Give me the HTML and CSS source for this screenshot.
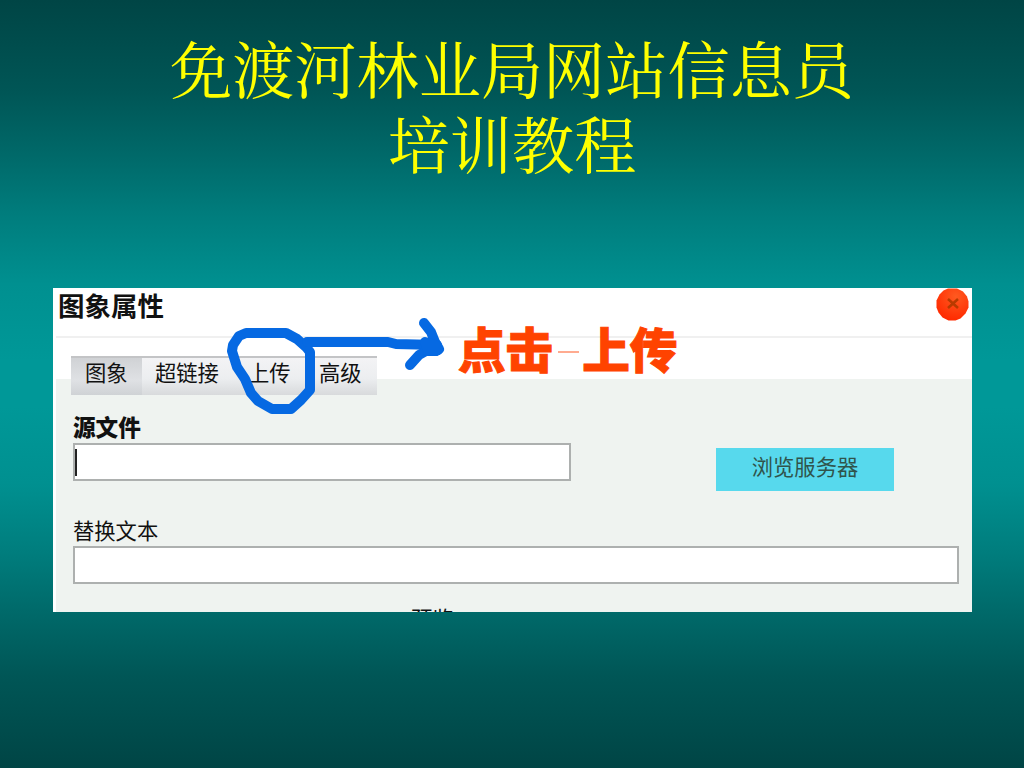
FILE: index.html
```
<!DOCTYPE html>
<html lang="zh-CN">
<head>
<meta charset="utf-8">
<title>免渡河林业局网站信息员培训教程</title>
<link rel="stylesheet" href="styles.css">
</head>
<body>
<main class="slide">
  <h1 class="slide-title">免渡河林业局网站信息员<br>培训教程</h1>
  <section class="dialog">
    <header class="dialog-header">
      <h2 class="dialog-title">图象属性</h2>
      <svg class="close" width="33" height="33" viewBox="0 0 33 33" aria-label="关闭">
        <defs><radialGradient id="red" cx=".6" cy=".25" r=".75"><stop offset="0" stop-color="#ff5a20"/><stop offset="1" stop-color="#ff2a00"/></radialGradient></defs>
        <path d="M12 .5h9l6 3 4 5 1.500 5v6l-3 6-5 5-5 2h-7l-6-3-4-5-2-5v-7l3-6 4-4z" fill="url(#red)"/>
        <path d="M12 11l10 9M22 11l-10 9" stroke="#b83a00" stroke-width="2.600"/>
      </svg>
    </header>
    <div class="tab-row">
      <nav class="tabs">
        <span class="tab tab-active">图象</span>
        <span class="tab tab-link">超链接</span>
        <span class="tab tab-upload">上传</span>
        <span class="tab tab-advanced">高级</span>
      </nav>
    </div>
    <div class="form">
      <div class="source-row">
        <div class="field">
          <label class="label label-bold">源文件</label>
          <div class="input input-source"><i class="caret"></i></div>
        </div>
        <span class="browse">浏览服务器</span>
      </div>
      <div class="field">
        <label class="label">替换文本</label>
        <div class="input"></div>
      </div>
      <div class="preview-label">预览</div>
    </div>
    <svg class="annotation" width="919" height="324" viewBox="53 288 919 324" fill="none" stroke="#0669e2" stroke-width="10" stroke-linecap="round" stroke-linejoin="round">
      <path d="M246 333L286 333L297 339L306 347L310 352L310 390L301 400L291 409L272 409L258 401L251 393L245 379L237 367L232 351L233 345L239 336Z"/>
      <path d="M307 342H388L396 344L437 345"/>
      <path d="M424 323L431 332L435 342L439 349L436 351L426 351L419 355L410 365"/>
      <path d="M425 342L436 345L438 350L428 351Z" fill="#0669e2"/>
    </svg>
    <div class="callout"><span>点击</span><i class="dash"></i><span>上传</span></div>
  </section>
</main>
</body>
</html>
```
FILE: styles.css
```
* { box-sizing: border-box; }
body {
  margin: 0;
  font-family: "Liberation Sans", "Noto Sans CJK SC", sans-serif;
  color: #111;
}
.slide {
  width: 1024px;
  height: 768px;
  overflow: hidden;
  padding: 30px 53px 0 53px;
  background: linear-gradient(#004545 0%, #005656 12%, #006b6b 21%, #007d7d 28%, #009090 37%, #009898 47%, #009898 53%, #009090 63%, #007d7d 72%, #006b6b 79%, #005656 88%, #004545 100%);
}
.slide-title {
  margin: 0;
  height: 258px;
  font-family: "Noto Serif CJK SC", "Noto Sans CJK SC", serif;
  font-size: 62.200px;
  font-weight: 400;
  line-height: 75px;
  text-align: center;
  color: #ff0;
}
.dialog {
  position: relative;
  display: flex;
  flex-direction: column;
  width: 919px;
  height: 324px;
  overflow: hidden;
  background: #fff;
}
.dialog-header {
  display: flex;
  flex: none;
  justify-content: space-between;
  height: 50px;
  margin-left: 3px;
  padding: 0 3px 0 2px;
  border-bottom: 2px solid #f0f0f0;
}
.dialog-title {
  margin: 0;
  font-size: 26.500px;
  font-weight: 700;
  line-height: 38px;
}
.tab-row {
  flex: none;
  height: 69px;
  margin-left: 3px;
  padding: 18px 0 0 15px;
  background: linear-gradient(#fff 41px, #eff3f0 41px);
}
.tabs {
  display: flex;
  width: 306px;
  height: 39px;
  border-top: 2px solid #c3c4c6;
  background: linear-gradient(#f3f3f5, #eceef0 55%, #d8dadc);
  font-size: 21.300px;
  line-height: 33px;
}
.tab { white-space: nowrap; }
.tab-active { width: 71px; padding-left: 14px; background: linear-gradient(#d0d2d5, #dfe1e4 60%, #cfd2d5); }
.tab-link { width: 93px; padding-left: 13px; }
.tab-upload { width: 72px; padding-left: 13px; }
.tab-advanced { width: 70px; padding-left: 12px; }
.form {
  flex: 1;
  min-height: 0;
  margin-left: 3px;
  padding: 8px 13px 0 17px;
  background: #eff3f0;
}
.source-row {
  display: flex;
  justify-content: space-between;
  height: 103px;
  padding-right: 65px;
}
.label {
  display: block;
  height: 28px;
  font-size: 21.300px;
  line-height: 28px;
}
.label-bold { font-size: 22.600px; font-weight: 900; }
.input {
  height: 38px;
  padding: 4px 0;
  border: 2px solid #adb0af;
  background: #fff;
}
.input-source { width: 498px; }
.caret { display: block; width: 2px; height: 27px; background: #222; }
.browse {
  width: 178px;
  height: 43px;
  margin-top: 33px;
  background: #57d9ed;
  color: #30544c;
  font-size: 21.300px;
  line-height: 40px;
  text-align: center;
}
.preview-label {
  padding: 21px 0 0 338px;
  font-size: 21.300px;
  line-height: 30px;
}
.annotation {
  position: absolute;
  left: 0;
  top: 0;
}
.callout {
  position: absolute;
  left: 405px;
  top: 34px;
  display: flex;
  align-items: center;
  color: #ff4300;
  font-size: 47.600px;
  font-weight: 900;
  line-height: 60px;
  -webkit-text-stroke: 1px #ff4300;
}
.dash { width: 21px; height: 2px; margin: 0 3px 0 5px; background: #ffab90; }
```
